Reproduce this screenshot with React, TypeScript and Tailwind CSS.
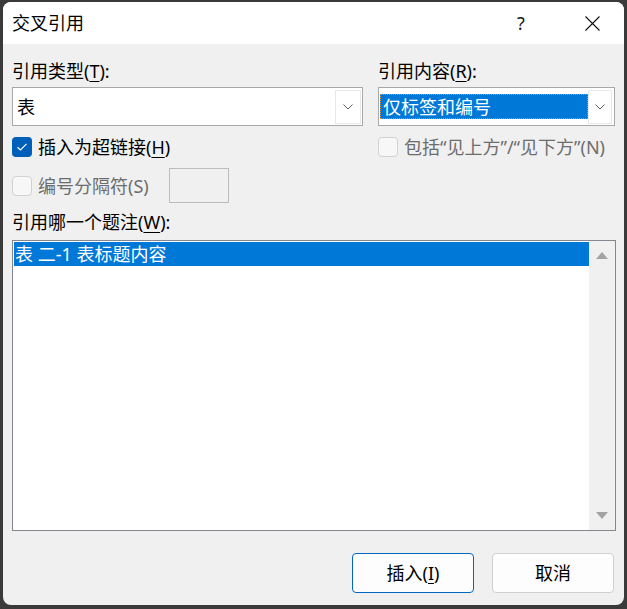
import React from 'react';

const font = { fontFamily: '"Noto Sans", "Noto Sans CJK SC", sans-serif' };

const Chevron = () => (
  <svg width="10" height="6" viewBox="0 0 10 6" fill="none">
    <path d="M0.5 0.5 L5 5 L9.5 0.5" stroke="#5f5f5f" strokeWidth="1" />
  </svg>
);

const DropButton = ({ w = 26 }: { w?: number }) => (
  <div
    className={(w === 26 ? 'w-[26px]' : 'w-[24px]') + ' h-[34px] bg-white border border-[#e8e8e8] flex items-center justify-center shrink-0'}
  >
    <Chevron />
  </div>
);

const Check = ({ checked, disabled }: { checked?: boolean; disabled?: boolean }) =>
  checked ? (
    <div className="w-[20px] h-[20px] rounded-[4px] bg-[#005fb8] flex items-center justify-center shrink-0">
      <svg width="12" height="10" viewBox="0 0 12 10" fill="none">
        <path d="M1.5 5.2 L4.5 8 L10.5 1.8" stroke="#ffffff" strokeWidth="1.2" />
      </svg>
    </div>
  ) : (
    <div
      className={
        'w-[20px] h-[20px] rounded-[4px] border shrink-0 ' +
        (disabled ? 'border-[#d2d2d2] bg-[#f7f7f7]' : 'border-[#888] bg-white')
      }
    />
  );

const Key = ({ k }: { k: string }) => <span className="underline underline-offset-[3px] decoration-1">{k}</span>;

export default function App() {
  return (
    <div className="w-[627px] h-[609px] bg-[#3a3a3a] pt-[2px] pl-[3px]" style={font}>
      <div className="w-[621px] h-[603px] rounded-[8px] overflow-hidden bg-[#f0f0f0] flex flex-col">
        {/* title bar */}
        <div className="h-[42px] bg-white flex items-center pl-[9px] shrink-0">
          <span className="text-[18px] leading-[24px] text-black">交叉引用</span>
          <span className="ml-auto text-[18px] leading-[24px] text-[#1a1a1a] w-[16px] text-center mr-[56px]">?</span>
          <svg width="15" height="15" viewBox="0 0 15 15" className="mr-[24px]">
            <path d="M0.5 0.5 L14.5 14.5 M14.5 0.5 L0.5 14.5" stroke="#111" strokeWidth="1.1" />
          </svg>
        </div>

        {/* body */}
        <div className="flex flex-col pl-[9px] pr-[8px] pt-[15px] pb-[12px] flex-1 text-[18px] leading-[24px] text-black">
          <div className="grid grid-cols-[351px_237px] gap-x-[15px]">
            <div>
              引用类型(<Key k="T" />):
            </div>
            <div>
              引用内容(<Key k="R" />):
            </div>

            <div className="mt-[4px] h-[39px] border border-[#a8a8a8] bg-white flex items-center pr-[1px]">
              <span className="pl-[4px] flex-1">表</span>
              <DropButton />
            </div>
            <div className="mt-[4px] h-[39px] border border-[#a8a8a8] bg-white flex items-center pl-[1px] pr-[2px]">
              <div className="flex-1 h-[25px] bg-[#0078d7] text-white border border-dotted border-[#e9892f] flex items-center pl-[2px]">
                仅标签和编号
              </div>
              <DropButton w={24} />
            </div>

            <div className="mt-[9px] flex items-center gap-[6px]">
              <Check checked />
              <span>
                插入为超链接(<Key k="H" />)
              </span>
            </div>
            <div className="mt-[9px] flex items-center gap-[6px] text-[#6d6d6d]">
              <Check disabled />
              <span>包括“见上方”/“见下方”(N)</span>
            </div>

            <div className="mt-[9px] flex items-center h-[35px]">
              <Check disabled />
              <span className="ml-[6px] text-[#6d6d6d]">编号分隔符(S)</span>
              <div className="ml-[20px] w-[60px] h-[35px] border border-[#bcbcbc] bg-[#f0f0f0]" />
            </div>
          </div>

          <div className="mt-[7px]">
            引用哪一个题注(<Key k="W" />):
          </div>

          <div className="mt-[6px] h-[291px] border border-[#828790] bg-white flex">
            <div className="flex-1 pl-[1px] pt-[1px]">
              <div className="h-[24px] bg-[#0078d7] text-white pl-[1px] flex items-center">表 二-1 表标题内容</div>
            </div>
            <div className="w-[26px] bg-[#f0f0f0] flex flex-col items-center justify-between py-[11px]">
              <svg width="12" height="7" viewBox="0 0 12 7">
                <path d="M6 0 L12 7 L0 7 Z" fill="#a3a3a3" />
              </svg>
              <svg width="12" height="7" viewBox="0 0 12 7">
                <path d="M0 0 L12 0 L6 7 Z" fill="#a3a3a3" />
              </svg>
            </div>
          </div>

          <div className="mt-[22px] flex justify-end gap-[18px] pr-[2px]">
            <button className="w-[122px] h-[40px] rounded-[4px] border border-[#0067c0] bg-[#fdfdfd] text-[18px] text-black">
              插入(<Key k="I" />)
            </button>
            <button className="w-[122px] h-[40px] rounded-[4px] border border-[#d0d0d0] bg-[#fdfdfd] text-[18px] text-black">
              取消
            </button>
          </div>
        </div>
      </div>
    </div>
  );
}
